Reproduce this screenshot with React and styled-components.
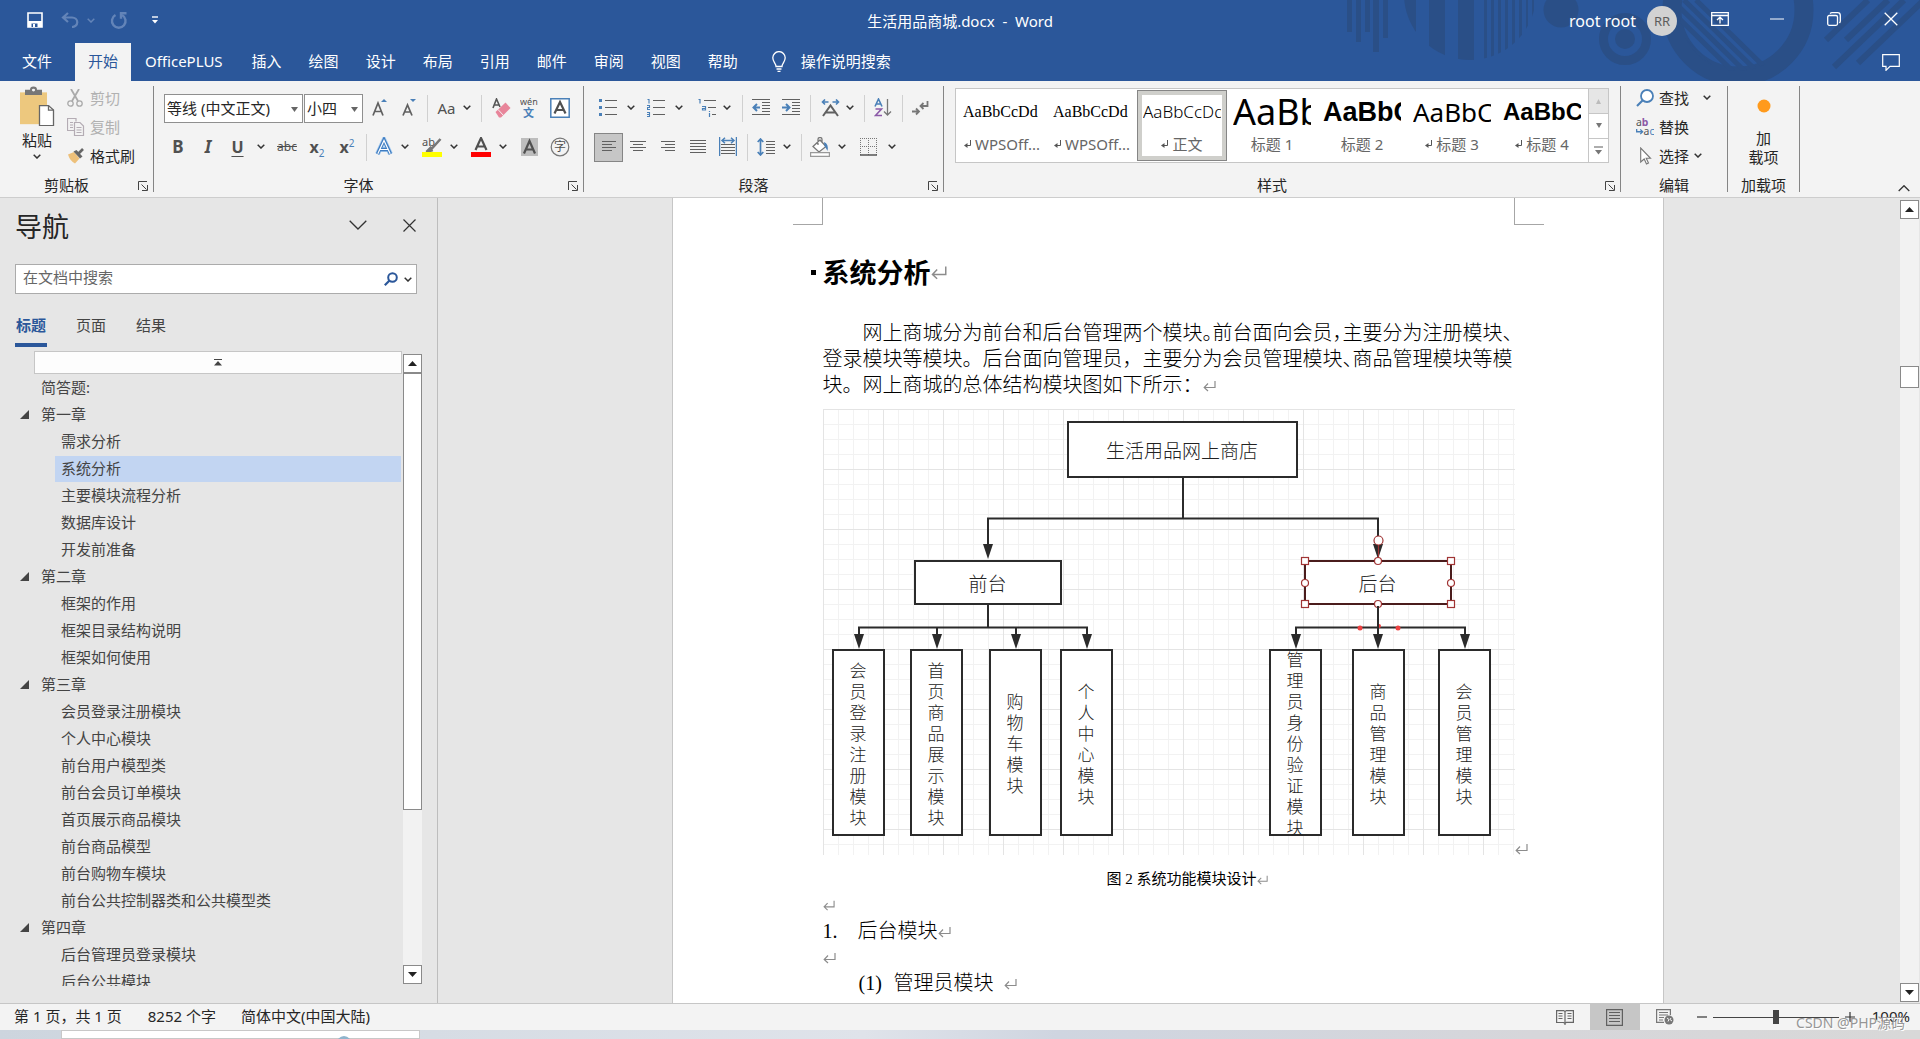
import React from "react";
import styled, { createGlobalStyle, css } from "styled-components";

const ui = `"Noto Sans", "Noto Sans CJK SC", sans-serif`;
const blue = "#2b579a";
const steel = "#4a80b8";

const Global = createGlobalStyle`
  * { box-sizing: border-box; }
  body { margin: 0; background: #e6e6e6; }
  button, input, select { font: inherit; color: inherit; }
  button { background: none; border: 0; padding: 0; cursor: pointer; }
  svg { display: block; flex: none; }
  p, h1, h2, ul, ol, figure { margin: 0; padding: 0; }
`;

const Shell = styled.div`
  display: flex;
  flex-direction: column;
  height: 100vh;
  overflow: hidden;
  font: 15px/20px ${ui};
  color: #262626;
  white-space: nowrap;
`;

/* ---------- header ---------- */
const Header = styled.header`
  position: relative;
  background: ${blue};
  color: #fff;
`;
const Decor = styled.svg`
  position: absolute;
  right: 0;
  top: 0;
`;
const TitleBar = styled.div`
  position: relative;
  display: grid;
  grid-template-columns: 1fr auto 1fr;
  align-items: center;
  height: 43px;
`;
const Quick = styled.div`
  display: flex;
  align-items: center;
  padding: 0 0 3px 27px;
`;
const QuickButton = styled.button`
  display: flex;
  align-items: center;
  gap: 8px;
  height: 24px;
  margin-right: ${(p) => p.$gap || 0}px;
`;
const DocName = styled.div`
  padding-bottom: 2px;
`;
const Account = styled.div`
  display: flex;
  align-items: center;
  justify-content: flex-end;
  padding: 0 1px 2px 0;
`;
const UserName = styled.span`
  font-size: 16px;
  margin-right: 11px;
`;
const Avatar = styled.span`
  width: 30px;
  height: 30px;
  border-radius: 50%;
  background: #d2d2d2;
  color: #5c5c5c;
  font-size: 13px;
  line-height: 30px;
  text-align: center;
  margin-right: 14px;
`;
const WindowButton = styled.button`
  display: flex;
  align-items: center;
  justify-content: center;
  width: 57px;
  height: 38px;
  margin-bottom: 3px;
`;
const TabBar = styled.nav`
  position: relative;
  display: flex;
  align-items: stretch;
  gap: 1px;
  height: 38px;
  padding-left: 9px;
`;
const Tab = styled.button`
  padding: 0 13px 2px;
  margin-right: ${(p) => p.$gap || 0}px;
  background: ${(p) => (p.$active ? "#f3f3f3" : "transparent")};
  color: ${(p) => (p.$active ? blue : "#fff")};
`;
const Tell = styled.button`
  display: flex;
  align-items: center;
  gap: 15px;
  padding: 0 0 2px 20px;
`;
const CommentButton = styled.button`
  margin: 0 20px 0 auto;
`;

/* ---------- ribbon ---------- */
const Ribbon = styled.div`
  display: flex;
  height: 117px;
  background: #f3f3f3;
  border-bottom: 1px solid #cdcdcd;
`;
const GroupBox = styled.section`
  display: flex;
  flex-direction: column;
  width: ${(p) => p.$w}px;
  flex: none;
`;
const GroupBody = styled.div`
  display: flex;
  flex: 1;
  flex-direction: ${(p) => (p.$rows ? "column" : "row")};
  gap: ${(p) => (p.$rows ? 10 : 0)}px;
  padding: ${(p) => p.$pad};
`;
const GroupLabel = styled.div`
  display: flex;
  height: 22px;
  span { flex: 1; text-align: center; }
`;
const Launcher = styled.button`
  display: flex;
  align-items: center;
  justify-content: center;
  width: 20px;
  height: 22px;
`;
const Divider = styled.div`
  width: 1px;
  flex: none;
  margin: 5px 0;
  background: #858585;
`;
const Row = styled.div`
  display: flex;
  align-items: center;
  height: 29px;
`;
const Sep = styled.span`
  width: 1px;
  height: 27px;
  margin: 0 3px 0 4px;
  background: #d0d0d0;
`;
const Tool = styled.button`
  display: flex;
  align-items: center;
  justify-content: center;
  gap: ${(p) => p.$gap || 8}px;
  width: ${(p) => p.$w}px;
  height: 29px;
  padding-bottom: 2px;
  ${(p) => p.$on && css`background: #c6c6c6; border: 1px solid #858585;`}
`;
const Letter = styled.span`
  font-size: ${(p) => p.$size || 17}px;
  color: #505050;
  font-weight: ${(p) => (p.$bold ? 700 : 400)};
  font-style: ${(p) => (p.$italic ? "italic" : "normal")};
  text-decoration: ${(p) => p.$line || "none"};
  text-underline-offset: 3px;
  sub, sup { font-size: 10px; line-height: 0; color: ${steel}; font-weight: 400; }
`;
const Combo = styled.label`
  position: relative;
  width: ${(p) => p.$w}px;
  height: 29px;
  margin-right: ${(p) => p.$gap}px;
  select {
    width: 100%;
    height: 100%;
    appearance: none;
    border: 1px solid #8f8f8f;
    border-radius: 0;
    background: #fff;
    padding: 0 2px 2px;
    outline: none;
  }
  svg { position: absolute; right: 5px; top: 13px; pointer-events: none; }
`;
const Paste = styled.button`
  display: flex;
  flex-direction: column;
  align-items: center;
  width: 46px;
  height: 78px;
  gap: 4px;
  margin: 2px 7px 0 0;
`;
const Stack = styled.div`
  display: flex;
  flex-direction: column;
`;
const LineTool = styled.button`
  display: flex;
  align-items: center;
  height: 29px;
  gap: 5px;
  padding-bottom: 2px;
  color: ${(p) => (p.$off ? "#b1b1b1" : "#262626")};
  > svg:first-child { width: 18px; }
  > svg:last-child { margin-left: ${(p) => p.$gap || 0}px; }
`;
const Gallery = styled.div`
  display: flex;
  height: 75px;
  border: 1px solid #c6c6c6;
  background: #fff;
`;
const Cells = styled.div`
  display: flex;
  padding: 1px;
`;
const Cell = styled.button`
  display: flex;
  flex-direction: column;
  width: 90px;
  height: 71px;
  padding: 2px 6px 0;
  overflow: hidden;
  ${(p) => p.$on && css`
    border: 1px solid #858585;
    box-shadow: inset 0 0 0 4px #cfcfcb;
    padding: 1px 5px 0;
  `}
`;
const Preview = styled.span`
  width: 78px;
  height: 42px;
  overflow: hidden;
  text-align: left;
  line-height: 40px;
  color: #000;
  font-family: ${(p) => p.$face};
  font-size: ${(p) => p.$size}px;
  font-weight: ${(p) => p.$weight || 400};
`;
const CellName = styled.span`
  display: flex;
  align-items: center;
  justify-content: center;
  gap: 3px;
  width: 78px;
  height: 20px;
  color: #666;
`;
const GalleryScroll = styled.div`
  display: grid;
  grid-template-rows: repeat(3, 1fr);
  width: 20px;
  border-left: 1px solid #c6c6c6;
  button { display: flex; align-items: center; justify-content: center; }
  button + button { border-top: 1px solid #c6c6c6; }
  button:first-child { background: #e6e6e6; }
`;
const AddIn = styled.button`
  display: flex;
  flex-direction: column;
  align-items: center;
  width: 100%;
  line-height: 19px;
  svg { margin-bottom: 16px; }
`;
const Collapse = styled.button`
  align-self: flex-end;
  margin: 0 10px 5px auto;
`;

/* ---------- workspace ---------- */
const Workspace = styled.div`
  display: flex;
  flex: 1;
  min-height: 0;
`;
const NavPane = styled.aside`
  display: flex;
  flex-direction: column;
  width: 438px;
  border-right: 1px solid #bdbdbd;
  padding: 9px 15px 17px;
  color: #444;
`;
const NavHead = styled.div`
  display: flex;
  align-items: center;
  gap: 36px;
  height: 40px;
  padding-right: 6px;
  h2 { flex: 1; font-size: 27px; line-height: 40px; font-weight: 400; color: #262626; }
  button { padding-bottom: 4px; }
`;
const SearchBox = styled.label`
  display: flex;
  align-items: center;
  gap: 6px;
  width: 402px;
  height: 30px;
  margin-top: 17px;
  padding: 0 4px 0 7px;
  border: 1px solid #ababab;
  background: #fff;
  input { flex: 1; border: 0; outline: 0; padding: 0 0 4px; background: none; }
  input::placeholder { color: #666; opacity: 1; }
`;
const NavTabs = styled.div`
  display: flex;
  gap: 28px;
  margin: 18px 0 4px;
`;
const NavTab = styled.button`
  height: 35px;
  width: 32px;
  padding-bottom: ${(p) => (p.$on ? 6 : 10)}px;
  color: ${(p) => (p.$on ? blue : "#444")};
  font-weight: ${(p) => (p.$on ? 700 : 400)};
  border-bottom: ${(p) => (p.$on ? `4px solid ${blue}` : 0)};
`;
const TreeArea = styled.div`
  display: flex;
  flex: 1;
  min-height: 0;
`;
const Tree = styled.ul`
  flex: 1;
  overflow: hidden;
  list-style: none;
`;
const TopStop = styled.li`
  display: flex;
  align-items: center;
  justify-content: center;
  height: 23px;
  margin: 0 1px 0 19px;
  border: 1px solid #c6c6c6;
  background: #fdfdfd;
`;
const Node = styled.li`
  display: flex;
  align-items: center;
  height: 27px;
  padding-left: ${(p) => (p.$deep ? 40 : 5)}px;
  svg { margin-right: 6px; }
`;
const NodeLink = styled.a`
  flex: 1;
  height: 26px;
  padding-left: 6px;
  line-height: 24px;
  margin-left: ${(p) => (p.$bare ? 15 : 0)}px;
  margin-right: 2px;
  color: inherit;
  text-decoration: none;
  background: ${(p) => (p.$on ? "#c2d5f2" : "transparent")};
`;
const ScrollBar = styled.div`
  display: flex;
  flex-direction: column;
  width: 19px;
  flex: none;
  background: #f2f2f2;
  margin: ${(p) => p.$m};
`;
const ScrollButton = styled.button`
  display: flex;
  align-items: center;
  justify-content: center;
  height: 19px;
  border: 1px solid #8a8a8a;
  background: #fff;
`;
const Track = styled.div`
  flex: 1;
  display: flex;
  flex-direction: column;
`;
const Before = styled.div`
  flex: ${(p) => p.$f};
`;
const Thumb = styled.div`
  flex: ${(p) => p.$f};
  border: 1px solid #8a8a8a;
  background: #fff;
`;
const Canvas = styled.main`
  display: flex;
  flex: 1;
  justify-content: center;
  min-width: 0;
  padding-right: 3px;
  overflow: hidden;
`;
const Page = styled.article`
  width: 992px;
  flex: none;
  padding: 0 149px 0 150px;
  border: solid #c6c6c6;
  border-width: 0 1px;
  background: #fff;
  color: #000;
  font: 300 20px/26px "Liberation Serif", "Noto Sans CJK SC", serif;
`;
const Corners = styled.div`
  display: flex;
  justify-content: space-between;
  margin: 0 -30px;
  span {
    width: 30px;
    height: 27px;
    border-bottom: 1px solid #a6a6a6;
  }
  span:first-child { border-right: 1px solid #a6a6a6; }
  span:last-child { border-left: 1px solid #a6a6a6; }
`;
const Heading = styled.h1`
  display: flex;
  align-items: center;
  margin: 27px 0 28px -12px;
  font: 700 27px/40px "Noto Sans CJK SC", sans-serif;
  &::before {
    content: "";
    width: 5px;
    height: 5px;
    margin-right: 7px;
    background: #000;
  }
`;
const Para = styled.p`
  text-indent: 40px;
  svg { display: inline-block; text-indent: 0; }
`;
const Half = styled.span`
  font-feature-settings: "halt";
`;
const Figure = styled.figure`
  display: flex;
  align-items: flex-end;
  margin: 11px -20px 11px 0;
`;
const Chart = styled.div`
  position: relative;
  width: 692px;
  height: 446px;
  flex: none;
  background-image:
    linear-gradient(#e4e4e4 1px, transparent 1px),
    linear-gradient(90deg, #e4e4e4 1px, transparent 1px),
    linear-gradient(#f2f2f2 1px, transparent 1px),
    linear-gradient(90deg, #f2f2f2 1px, transparent 1px);
  background-size: 60px 60px, 60px 60px, 15px 15px, 15px 15px;
`;
const Links = styled.svg`
  position: absolute;
  inset: 0;
`;
const Box = styled.div`
  position: absolute;
  left: ${(p) => p.$x}px;
  top: ${(p) => p.$y}px;
  width: ${(p) => p.$w}px;
  height: ${(p) => p.$h}px;
  display: flex;
  align-items: center;
  justify-content: center;
  border: 2px solid ${(p) => (p.$picked ? "#4a1c1c" : "#2b2b2b")};
  background: #fff;
  color: #222;
  font: 300 19px/21px "Noto Sans CJK SC", sans-serif;
  ${(p) => p.$tall && css`
    font-size: 17px;
    padding: 0 16px;
    white-space: normal;
    text-align: center;
    word-break: break-all;
  `}
`;
const Caption = styled.p`
  display: flex;
  align-items: center;
  justify-content: center;
  padding-left: 38px;
  font-size: 15px;
  font-weight: 400;
`;
const ListLine = styled.p`
  display: flex;
  align-items: center;
  height: 26px;
  padding-left: ${(p) => p.$in || 0}px;
  > span:first-child { width: 35px; }
`;

/* ---------- bottom ---------- */
const Status = styled.footer`
  position: relative;
  display: flex;
  align-items: center;
  height: 27px;
  padding: 0 10px 0 14px;
  border-top: 1px solid #c6c6c6;
  background: #f3f3f3;
`;
const StatusText = styled.span`
  padding-bottom: 2px;
  margin-right: ${(p) => p.$gap || 0}px;
`;
const ViewButton = styled.button`
  display: flex;
  align-items: center;
  justify-content: center;
  width: 50px;
  height: 26px;
  margin-left: ${(p) => (p.$first ? "auto" : 0)};
  background: ${(p) => (p.$on ? "#c6c6c6" : "transparent")};
`;
const Zoom = styled.div`
  display: flex;
  align-items: center;
  gap: 6px;
  margin: 0 17px 0 7px;
`;
const Slider = styled.input`
  width: 126px;
  height: 16px;
  margin: 0;
  appearance: none;
  background: linear-gradient(#444, #444) center / 100% 1px no-repeat;
  &::-webkit-slider-thumb {
    appearance: none;
    width: 6px;
    height: 14px;
    background: #444;
  }
`;
const Watermark = styled.span`
  position: absolute;
  right: 15px;
  top: 9px;
  font-size: 14px;
  color: #969696;
  text-shadow: 1px 1px 0 #fff;
`;
const Taskbar = styled.div`
  display: flex;
  align-items: flex-start;
  height: 9px;
  padding: 0 92px 0 61px;
  overflow: hidden;
  background: linear-gradient(90deg, #cdd5de, #dfe3ea 45%, #cfd5e0 55%, #d6d6da 80%, #d8d8d8);
  color: #000;
`;
const TaskPreview = styled.div`
  width: 359px;
  height: 9px;
  padding: 4px 0 0 275px;
  border: 1px solid #c8c8c8;
  background: #fff;
`;
const Clock = styled.time`
  margin: 3px 0 0 auto;
`;

/* ---------- drawings ---------- */
const S = ({ w, h, children, ...r }) => (
  <svg width={w} height={h} viewBox={`0 0 ${w} ${h}`} fill="none" aria-hidden="true" {...r}>{children}</svg>
);
const Chev = ({ c = "#333", w = 8, s = 1.5, up }) => (
  <S w={w} h={w / 2 + 1}>
    <path d={up ? `M.7 ${w / 2}L${w / 2} .7L${w - 0.7} ${w / 2}` : `M.7 .7L${w / 2} ${w / 2}L${w - 0.7} .7`} stroke={c} strokeWidth={s} />
  </S>
);
const Tri = ({ up, c = "#222", w = 9 }) => (
  <S w={w} h={5}><path d={up ? `M0 5L${w / 2} 0L${w} 5z` : `M0 0L${w / 2} 5L${w} 0z`} fill={c} /></S>
);
const Mark = ({ w = 13 }) => (
  <svg width={w} height={w} viewBox="0 0 13 13" fill="none" aria-hidden="true">
    <path d="M12 2v6.500H1.500M5 4.500L1.200 8.500L5 12" stroke="#8c8c8c" strokeWidth="1.200" />
  </svg>
);
const SmallMark = () => (
  <S w={8} h={8}><path d="M6.500 0v5.500H2" stroke="#555" /><path d="M0 5.500L3.500 3v5z" fill="#555" /></S>
);
const Lines = ({ rows, w = 18, h = 18, c = "#606060", children }) => (
  <S w={w} h={h}>
    {rows.map(([x1, x2, y]) => <path key={`${x1}-${y}`} d={`M${x1} ${y}.5H${x2}`} stroke={c} />)}
    {children}
  </S>
);
const SvgText = ({ x, y, s, c = "#505050", b, children }) => (
  <text x={x} y={y} fontSize={s} fill={c} fontWeight={b ? 700 : 400} fontFamily="Noto Sans, Noto Sans CJK SC, sans-serif">{children}</text>
);

const LaunchIcon = () => (
  <S w={10} h={10}><path d="M.5 9V.5H9M3.500 3.500L8.500 8.500M9.500 4v5.500H4" stroke="#444" /></S>
);

function HeaderArt() {
  const d = "#2a4f87";
  return (
    <Decor width="580" height="81" viewBox="1340 0 580 81" aria-hidden="true">
      <defs>
        <clipPath id="disc"><circle cx="1470" cy="-6" r="66" /></clipPath>
        <clipPath id="hole"><circle cx="1738" cy="13" r="58" /></clipPath>
      </defs>
      <g fill={d}>
        <path d="M1347 0h5v32h-5zM1356 0h5v42h-5zM1365 0h5v32h-5zM1373 0h6v52h-6zM1383 0h5v38h-5z" />
        <path clipPath="url(#disc)" d="M1404 0h12v80h-12zM1429 0h16v80h-16zM1458 0h16v80h-16zM1484 0h3v80h-3zM1491 0h3v80h-3zM1498 0h3v80h-3zM1505 0h3v80h-3zM1512 0h3v80h-3zM1519 0h3v80h-3zM1526 0h2v80h-2zM1532 0h2v80h-2z" />
        <circle cx="1561" cy="10" r="17.500" />
        <circle cx="1625" cy="39" r="10" />
      </g>
      <g fill="none" stroke={d}>
        <circle cx="1625" cy="39" r="21.500" strokeWidth="9" />
        <circle cx="1738" cy="10" r="66" strokeWidth="19" />
        <path clipPath="url(#hole)" strokeWidth="5" d="M1660 0l90 88M1672 0l90 88M1684 0l90 88M1696 0l90 88M1642 0l90 88" />
        <path strokeWidth="6" d="M1826 40L1868 0M1846 40L1888 0M1834 67L1904 0M1858 63L1924 0" />
      </g>
    </Decor>
  );
}

const tabs = ["插入", "绘图", "设计", "布局", "引用", "邮件", "审阅", "视图", "帮助"];

function TopBar() {
  return (
    <Header>
      <HeaderArt />
      <TitleBar>
        <Quick>
          <QuickButton $gap={18} aria-label="保存">
            <S w={16} h={16}><path d="M1 1h14v14H1z" stroke="#fff" strokeWidth="1.600" /><path d="M1 9h14v6H1z" fill="#fff" /><path d="M4.500 15v-3.500h6V15" fill={blue} /><path d="M6 12h2v3H6z" fill="#fff" /></S>
          </QuickButton>
          <QuickButton $gap={15} aria-label="撤消">
            <S w={18} h={16}><path d="M7 1L2 5.500L7 10M2 5.500h9a5 4.500 0 0 1 0 9.500" stroke="#6384b8" strokeWidth="2.200" /></S>
            <Chev c="#6384b8" />
          </QuickButton>
          <QuickButton $gap={24} aria-label="重复">
            <S w={18} h={17}><path d="M5.500 3a6.800 6.800 0 1 0 6.500 0" stroke="#6384b8" strokeWidth="2.400" /><path d="M16.500 1.300H11v5.500" stroke="#6384b8" strokeWidth="2.400" /></S>
          </QuickButton>
          <QuickButton aria-label="自定义快速访问工具栏">
            <S w={6} h={8}><path d="M0 1h6" stroke="#fff" strokeWidth="1.400" /><path d="M0 4h6L3 7.500z" fill="#fff" /></S>
          </QuickButton>
        </Quick>
        <DocName>生活用品商城.docx&nbsp; -&nbsp; Word</DocName>
        <Account>
          <UserName>root root</UserName>
          <Avatar>RR</Avatar>
          <WindowButton aria-label="功能区显示选项">
            <S w={18} h={14}><path d="M.7 .7h16.600v12.600H.7zM.7 3.500h16.600M9 11.500V5.500M6 8L9 5.200L12 8" stroke="#fff" strokeWidth="1.300" /></S>
          </WindowButton>
          <WindowButton aria-label="最小化"><S w={14} h={2}><path d="M0 1h14" stroke="#fff" /></S></WindowButton>
          <WindowButton aria-label="还原">
            <S w={14} h={14}><rect x=".7" y="3.500" width="9.800" height="9.800" rx="1.500" stroke="#fff" strokeWidth="1.300" /><path d="M3 1.500Q4 .7 5 .7h5.500a2.800 2.800 0 0 1 2.800 2.800V9q0 1-.8 2" stroke="#fff" strokeWidth="1.300" /></S>
          </WindowButton>
          <WindowButton aria-label="关闭"><S w={14} h={14}><path d="M.7 .7l12.600 12.600M13.300 .7L.7 13.300" stroke="#fff" strokeWidth="1.300" /></S></WindowButton>
        </Account>
      </TitleBar>
      <TabBar>
        <Tab $gap={9}>文件</Tab>
        <Tab $active>开始</Tab>
        <Tab $gap={2}>OfficePLUS</Tab>
        {tabs.map((t) => <Tab key={t}>{t}</Tab>)}
        <Tell>
          <S w={14} h={21}><path d="M4 15.500c0-3-3.200-4.500-3.200-8.700a6.200 6.200 0 0 1 12.400 0c0 4.200-3.200 5.700-3.200 8.700zM4.500 18h5M5.500 20.300h3" stroke="#fff" strokeWidth="1.300" /></S>
          操作说明搜索
        </Tell>
        <CommentButton aria-label="批注">
          <S w={18} h={17}><path d="M.7 .7h16.600v11.600H8L4 16.300V12.300H.7z" stroke="#fff" strokeWidth="1.200" /></S>
        </CommentButton>
      </TabBar>
    </Header>
  );
}

function Group({ w, label, pad, rows, launch, children }) {
  return (
    <>
      <GroupBox $w={w}>
        <GroupBody $pad={pad} $rows={rows}>{children}</GroupBody>
        <GroupLabel>
          <span>{label}</span>
          {launch && <Launcher aria-label={`${label}设置`}><LaunchIcon /></Launcher>}
        </GroupLabel>
      </GroupBox>
      <Divider />
    </>
  );
}

function ClipboardGroup() {
  return (
    <Group w={153} label="剪贴板" pad="3px 0 0 14px" launch>
      <Paste>
        <svg width="36" height="40" viewBox="0 0 36 44" fill="none" preserveAspectRatio="none" aria-hidden="true">
          <path d="M1 7h27v35H1z" fill="#edc87e" /><path d="M6 4h5a3.500 3.500 0 0 1 7 0h5v6H6z" fill="#777" /><circle cx="14.500" cy="4.500" r="1.600" fill="#f3f3f3" />
          <path d="M20.500 21.500h9l5 5v17h-14z" fill="#fff" stroke="#666" strokeWidth="1.300" /><path d="M29.500 21.500v5h5" stroke="#666" strokeWidth="1.300" />
        </svg>
        粘贴
        <Chev />
      </Paste>
      <Stack>
        <LineTool $off>
          <S w={18} h={18}><path d="M4 0l7 12M12 0L5 12" stroke="#aaa" strokeWidth="1.800" /><circle cx="3.500" cy="14.500" r="2.700" stroke="#aaa" strokeWidth="1.300" /><circle cx="12.500" cy="14.500" r="2.700" stroke="#aaa" strokeWidth="1.300" /></S>
          剪切
        </LineTool>
        <LineTool $off>
          <S w={18} h={18}><path d="M9 3.500V.5H.5v12H7M3 4.500h3M3 7h3M3 9.500h3" stroke="#b4acb4" strokeWidth="1.200" /><path d="M7.500 4.500H13l3.500 3.500v9.500h-9zM9.500 9.500h5M9.500 12h5M9.500 14.500h5" stroke="#b4acb4" strokeWidth="1.200" /></S>
          复制
        </LineTool>
        <LineTool>
          <S w={18} h={16}><path d="M1 6.500L7 4l5.500 6.500L8 15.500Q3 13 1 6.500z" fill="#edc07a" /><path d="M6.500 3.500l3-1.500 6 6.500-2.500 2z" fill="#666" /><path d="M11.500 5.500L16 1" stroke="#666" strokeWidth="2.600" /></S>
          格式刷
        </LineTool>
      </Stack>
    </Group>
  );
}

function FontGroup() {
  return (
    <Group w={429} label="字体" pad="13px 0 0 10px" rows launch>
      <Row>
        <Combo $w={139} $gap={1}><select aria-label="字体"><option>等线 (中文正文)</option></select><Tri c="#666" w={7} /></Combo>
        <Combo $w={59} $gap={2}><select aria-label="字号"><option>小四</option></select><Tri c="#666" w={7} /></Combo>
        <Tool $w={30} aria-label="增大字号"><S w={16} h={18}><path d="M1 16.500L6 4l5 12.500M3 12.500h6" stroke="#606060" strokeWidth="1.700" /><path d="M9 3L12 0l3 3z" fill={steel} /></S></Tool>
        <Tool $w={28} aria-label="减小字号"><S w={16} h={18}><path d="M2 16.500L6.500 6L11 16.500M3.500 13h6" stroke="#606060" strokeWidth="1.700" /><path d="M9 0L12 3l3-3z" fill={steel} /></S></Tool>
        <Sep />
        <Tool $w={46} $gap={7}><Letter $size={15}>Aa</Letter><Chev /></Tool>
        <Sep />
        <Tool $w={32} aria-label="清除格式"><S w={19} h={20}><path d="M1 10L4.500 1L8 9M2.500 7h4" stroke="#555" strokeWidth="1.600" /><path d="M3.500 14L13.500 4.500l5 5.500L9 19.500H7z" fill="#e8859a" /><path d="M6 11.500l5.500 6" stroke="#f3f3f3" /></S></Tool>
        <Tool $w={24} aria-label="拼音指南"><S w={18} h={20}><SvgText x={0} y={7} s={9}>wén</SvgText><SvgText x={3} y={19} s={11} c={steel} b>文</SvgText></S></Tool>
        <Tool $w={38} aria-label="字符边框"><S w={20} h={20}><path d="M.8 .8h18.400v18.400H.8z" fill="#fff" stroke={steel} strokeWidth="1.500" /><path d="M4.500 15.500L10 4l5.500 11.500M6.500 12h7" stroke="#505050" strokeWidth="2.200" /></S></Tool>
      </Row>
      <Row>
        <Tool $w={28}><Letter $bold>B</Letter></Tool>
        <Tool $w={32}><Letter $bold $italic>I</Letter></Tool>
        <Tool $w={48} $gap={13}><Letter $bold $size={16} $line="underline">U</Letter><Chev /></Tool>
        <Tool $w={30}><Letter $size={12} $line="line-through">abc</Letter></Tool>
        <Tool $w={30}><Letter $bold $size={16}>x<sub>2</sub></Letter></Tool>
        <Tool $w={30}><Letter $bold $size={16}>x<sup>2</sup></Letter></Tool>
        <Sep />
        <Tool $w={44} aria-label="文本效果"><S w={18} h={20}><path d="M2.500 17L9 3l6.500 14M5 12.500h8" stroke="#a9cdf0" strokeWidth="5" /><path d="M2.500 17L9 3l6.500 14M5 12.500h8" stroke="#3f7cc0" strokeWidth="3.400" /><path d="M2.800 16.700L9 3.500l6.200 13.200M5 12.500h8" stroke="#fff" strokeWidth="1.200" /></S><Chev /></Tool>
        <Tool $w={52} aria-label="突出显示颜色"><S w={20} h={20}><SvgText x={0} y={9} s={11}>ab</SvgText><path d="M18.500 2L9 12.500M8.500 11l-4 4 5-1.500z" stroke="#777" strokeWidth="2.600" /><path d="M0 15h20v5H0z" fill="#ff0" /></S><Chev /></Tool>
        <Tool $w={46} aria-label="字体颜色"><S w={20} h={20}><path d="M4.500 13L10 1l5.500 12M6.500 9.500h7" stroke="#505050" strokeWidth="2.200" /><path d="M0 15h20v5H0z" fill="red" /></S><Chev /></Tool>
        <Tool $w={34} aria-label="字符底纹"><S w={17} h={18}><path d="M0 0h17v18H0z" fill="#bdbdbd" /><path d="M3 15.500L8.500 3L14 15.500M5 11.500h7" stroke="#505050" strokeWidth="2.200" /></S></Tool>
        <Tool $w={28} aria-label="带圈字符"><S w={20} h={20}><circle cx="10" cy="10" r="8.800" stroke="#777" strokeWidth="1.200" /><SvgText x={4} y={14} s={12}>字</SvgText></S></Tool>
      </Row>
    </Group>
  );
}

function ParagraphGroup() {
  const arrowRight = <path d="M0 8.500h7M4 5l3.500 3.500L4 12" stroke={steel} strokeWidth="2" />;
  const arrowLeft = <path d="M1 8.500h7M5 5L1.500 8.500L5 12" stroke={steel} strokeWidth="2" />;
  const indent = [[0, 18, 0], [10, 18, 3], [10, 18, 6], [10, 18, 9], [10, 18, 12], [0, 18, 15]];
  return (
    <Group w={359} label="段落" pad="13px 0 0 10px" rows launch>
      <Row>
        <Tool $w={46} $gap={10} aria-label="项目符号"><Lines rows={[[6, 18, 1], [6, 18, 8], [6, 18, 15]]}><path d="M0 0h3v3H0zM0 7h3v3H0zM0 14h3v3H0z" fill={steel} /></Lines><Chev /></Tool>
        <Tool $w={50} $gap={10} aria-label="编号"><Lines rows={[[6, 18, 1], [6, 18, 8], [6, 18, 15]]}><path d="M.5 .5H2v4M0 6.500h2.500v2H.5v2h2.500M0 13.500h2.500v4H0M0 15.500h2.500" stroke={steel} strokeWidth="1.100" /></Lines><Chev /></Tool>
        <Tool $w={48} $gap={7} aria-label="多级列表"><Lines rows={[[6, 18, 1], [10, 18, 8], [14, 18, 15]]}><path d="M.5 .5H2v4M4 7.500h3.500v3.500H4.500V9.500h3M11.500 14v4M11.500 12v1" stroke={steel} strokeWidth="1.200" /></Lines><Chev /></Tool>
        <Sep />
        <Tool $w={30} aria-label="减少缩进量"><Lines h={17} rows={indent}>{arrowLeft}</Lines></Tool>
        <Tool $w={30} aria-label="增加缩进量"><Lines h={17} rows={indent}>{arrowRight}</Lines></Tool>
        <Sep />
        <Tool $w={46} $gap={6} aria-label="中文版式"><S w={19} h={18}><path d="M2 17L9.500 6.500L17 17M5 13.500h9" stroke="#606060" strokeWidth="2" /><path d="M7.500 3H1.500M4 .5L1.500 3L4 5.500M11.500 3h6M15 .5L17.500 3L15 5.500" stroke={steel} strokeWidth="1.600" /></S><Chev /></Tool>
        <Sep />
        <Tool $w={30} aria-label="排序"><S w={18} h={19}><path d="M1 8.500L4.500 1L8 8.500M2.500 6h4" stroke={steel} strokeWidth="1.600" /><path d="M1.500 11h6L1.500 17.500h6.500" stroke="#8c5aa8" strokeWidth="1.600" /><path d="M13.500 1v16M10 13.500l3.500 3.500 3.500-3.500" stroke="#777" strokeWidth="1.300" /></S></Tool>
        <Sep />
        <Tool $w={28} aria-label="显示编辑标记"><S w={17} h={16}><path d="M15.500 1v5H9M11.500 3L8.500 6l3 3M0 11.500h6M4 8.500l3 3-3 3" stroke="#777" strokeWidth="1.800" /></S></Tool>
      </Row>
      <Row>
        <Tool $w={29} $on aria-label="左对齐"><Lines w={16} h={12} rows={[[1, 15, 0], [1, 11, 3], [1, 15, 6], [1, 11, 9]]} /></Tool>
        <Tool $w={30} aria-label="居中"><Lines w={16} h={12} rows={[[0, 16, 0], [3, 13, 3], [0, 16, 6], [3, 13, 9]]} /></Tool>
        <Tool $w={30} aria-label="右对齐"><Lines w={16} h={12} rows={[[1, 15, 0], [5, 15, 3], [1, 15, 6], [5, 15, 9]]} /></Tool>
        <Tool $w={30} aria-label="两端对齐"><Lines w={16} h={14} rows={[[0, 16, 0], [0, 16, 3], [0, 16, 6], [0, 16, 9], [0, 16, 12]]} /></Tool>
        <Tool $w={30} aria-label="分散对齐"><Lines h={19} rows={[[2, 16, 7], [2, 16, 10], [2, 16, 13], [2, 16, 16]]}><path d="M.5 0v19M17.500 0v19M3 3.500h12M6 .8L3 3.500L6 6.200M12 .8l3 2.700-3 2.700" stroke={steel} strokeWidth="1.500" /></Lines></Tool>
        <Sep />
        <Tool $w={46} aria-label="行距"><Lines rows={[[9, 18, 3], [9, 18, 6], [9, 18, 9], [9, 18, 12], [9, 18, 15]]}><path d="M3.500 1v16M.7 4l2.800-3 2.800 3M.7 14l2.800 3 2.800-3" stroke={steel} strokeWidth="1.700" /></Lines><Chev /></Tool>
        <Sep />
        <Tool $w={46} aria-label="底纹"><S w={20} h={20}><path d="M3 9.500L10 3l6 6.500-7 5.500zM8 8V2.500a2 2 0 0 1 4 0V6" stroke="#777" strokeWidth="1.300" fill="#fff" /><path d="M14 5q5 2 3.500 9-2-4-3-5z" fill={steel} /><path d="M.6 15.600h18.800v3.800H.6z" fill="#fff" stroke="#999" strokeWidth="1.200" /></S><Chev /></Tool>
        <Tool $w={54} $gap={11} aria-label="边框"><S w={17} h={18}><path d="M.5 0v17M16.500 0v17M8.500 0v17M0 .5h17M0 8.500h17" stroke="#777" strokeDasharray="1 1" /><path d="M0 17h17" stroke="#555" strokeWidth="1.500" /></S><Chev /></Tool>
      </Row>
    </Group>
  );
}

const serif = `"Liberation Serif", serif`;
const arial = `"Liberation Sans", sans-serif`;
const styles = [
  { text: "AaBbCcDd", face: serif, size: 16, name: "WPSOff...", mark: true },
  { text: "AaBbCcDd", face: serif, size: 16, name: "WPSOff...", mark: true },
  { text: "AaBbCcDd", face: ui, size: 17, weight: 300, name: "正文", mark: true, on: true },
  { text: "AaBb", face: ui, size: 36, name: "标题 1" },
  { text: "AaBbC", face: arial, size: 27, weight: 700, name: "标题 2" },
  { text: "AaBbC", face: ui, size: 26, name: "标题 3", mark: true },
  { text: "AaBbC", face: arial, size: 24, weight: 700, name: "标题 4", mark: true },
];

function StylesGroup() {
  return (
    <Group w={676} label="样式" pad="7px 0 0 11px" launch>
      <Gallery>
        <Cells>
          {styles.map((s, i) => (
            <Cell key={i} $on={s.on}>
              <Preview $face={s.face} $size={s.size} $weight={s.weight}>{s.text}</Preview>
              <CellName>{s.mark && <SmallMark />}{s.name}</CellName>
            </Cell>
          ))}
        </Cells>
        <GalleryScroll>
          <button aria-label="上一行"><Tri up c="#bbb" w={5} /></button>
          <button aria-label="下一行"><Tri c="#777" w={6} /></button>
          <button aria-label="其他样式"><S w={9} h={9}><path d="M0 1h9" stroke="#777" strokeWidth="1.200" /><path d="M1 4h7L4.500 8.500z" fill="#777" /></S></button>
        </GalleryScroll>
      </Gallery>
    </Group>
  );
}

function EditGroup() {
  return (
    <Group w={106} label="编辑" pad="3px 0 0 15px">
      <Stack>
        <LineTool $gap={9}>
          <S w={18} h={18}><circle cx="11" cy="7" r="6" stroke={steel} strokeWidth="1.800" fill="#fff" /><path d="M6.500 11.500L1 17" stroke={steel} strokeWidth="2.200" /></S>
          查找
          <Chev />
        </LineTool>
        <LineTool>
          <S w={19} h={18}><text x="0" y="8" fontSize="11" fill="#555" fontFamily="Noto Sans, sans-serif">a<tspan fill="#8c5aa8" fontWeight="700">b</tspan></text><text x="8" y="17" fontSize="11" fill="#555" fontFamily="Noto Sans, sans-serif">a<tspan fill={steel}>c</tspan></text><path d="M.7 11v3h6M4.500 11.500L7 14l-2.500 2.500" stroke={steel} strokeWidth="1.400" /></S>
          <span>替换</span>
        </LineTool>
        <LineTool>
          <S w={18} h={18}><path d="M4.700 1v14l3.500-3 2.300 5 2-1-2.300-4.700h4.300z" stroke="#777" strokeWidth="1.100" fill="#fff" /></S>
          选择
          <Chev />
        </LineTool>
      </Stack>
    </Group>
  );
}

function RibbonBar() {
  return (
    <Ribbon>
      <ClipboardGroup />
      <FontGroup />
      <ParagraphGroup />
      <StylesGroup />
      <EditGroup />
      <Group w={71} label="加载项" pad="18px 0 0">
        <AddIn>
          <S w={14} h={14}><circle cx="7" cy="7" r="6.500" fill="#ff9a1c" /></S>
          <span>加</span>
          <span>载项</span>
        </AddIn>
      </Group>
      <Collapse aria-label="折叠功能区"><Chev w={12} s={1.300} up /></Collapse>
    </Ribbon>
  );
}

const outline = [
  ["简答题:", 0], ["第一章", 1], ["需求分析"], ["系统分析"], ["主要模块流程分析"], ["数据库设计"], ["开发前准备"],
  ["第二章", 1], ["框架的作用"], ["框架目录结构说明"], ["框架如何使用"],
  ["第三章", 1], ["会员登录注册模块"], ["个人中心模块"], ["前台用户模型类"], ["前台会员订单模块"], ["首页展示商品模块"],
  ["前台商品模型"], ["前台购物车模块"], ["前台公共控制器类和公共模型类"],
  ["第四章", 1], ["后台管理员登录模块"], ["后台公共模块"],
];

function Scroller({ before, thumb, after, m }) {
  return (
    <ScrollBar $m={m}>
      <ScrollButton aria-label="向上滚动"><Tri up /></ScrollButton>
      <Track><Before $f={before} /><Thumb $f={thumb} /><Before $f={after} /></Track>
      <ScrollButton aria-label="向下滚动"><Tri /></ScrollButton>
    </ScrollBar>
  );
}

function Navigation() {
  return (
    <NavPane>
      <NavHead>
        <h2>导航</h2>
        <button aria-label="任务窗格选项"><Chev w={18} s={1.300} /></button>
        <button aria-label="关闭"><S w={13} h={13}><path d="M.5 .5l12 12M12.500 .5l-12 12" stroke="#333" strokeWidth="1.200" /></S></button>
      </NavHead>
      <SearchBox>
        <input aria-label="在文档中搜索" placeholder="在文档中搜索" />
        <S w={14} h={14}><circle cx="8.500" cy="5.500" r="4.300" stroke={blue} strokeWidth="2" /><path d="M5.500 8.500L.8 13.200" stroke={blue} strokeWidth="2.200" /></S>
        <Chev />
      </SearchBox>
      <NavTabs>
        <NavTab $on>标题</NavTab>
        <NavTab>页面</NavTab>
        <NavTab>结果</NavTab>
      </NavTabs>
      <TreeArea>
        <Tree>
          <TopStop><S w={8} h={7}><path d="M0 .5h8" stroke="#444" /><path d="M0 6.500L4 2l4 4.500z" fill="#444" /></S></TopStop>
          {outline.map(([name, level]) => (
            <Node key={name} $deep={level === undefined}>
              {level === 1 && <S w={9} h={9}><path d="M9 0v9H0z" fill="#444" /></S>}
              <NodeLink href="#" $on={name === "系统分析"} $bare={level === 0}>{name}</NodeLink>
            </Node>
          ))}
        </Tree>
        <Scroller before={0} thumb={436} after={156} m="3px 0 2px" />
      </TreeArea>
    </NavPane>
  );
}

const leaves = [
  [9, "会员登录注册模块"], [87, "首页商品展示模块"], [166, "购物车模块"], [237, "个人中心模块"],
  [446, "管理员身份验证模块"], [529, "商品管理模块"], [615, "会员管理模块"],
];

function StructureChart() {
  const heads = [[165, 150], [555, 150], [36, 240], [114, 240], [193, 240], [264, 240], [473, 240], [555, 240], [642, 240]];
  return (
    <Chart>
      <Box $x={244} $y={12} $w={231} $h={57}>生活用品网上商店</Box>
      <Box $x={91} $y={151} $w={148} $h={45}>前台</Box>
      <Box $x={481} $y={151} $w={148} $h={45} $picked>后台</Box>
      {leaves.map(([x, name]) => <Box key={name} $x={x} $y={240} $w={53} $h={187} $tall>{name}</Box>)}
      <Links width="692" height="446" viewBox="0 0 692 446" fill="none" aria-hidden="true">
        <path stroke="#2b2b2b" strokeWidth="2" d="M360 69v40M165 140V109.500H555V140M165 196v22.500M36 228v-9.500h228v9.500M114 218v10M193 218v10M555 200v30M473 228v-9.500h169v9.500" />
        {heads.map(([x, y]) => <path key={`${x}-${y}`} d={`M${x - 5} ${y - 15}h10l-5 15z`} fill="#2b2b2b" />)}
        <g fill="#ee4444"><circle cx="537" cy="219" r="2.500" /><circle cx="556" cy="217" r="2" /><circle cx="575" cy="219" r="2.500" /></g>
        <g fill="#fff" stroke="#a03434" strokeWidth="1.200">
          <path d="M555.500 136v13" />
          <circle cx="555.500" cy="131.500" r="4.500" />
          {[[482, 152], [628, 152], [482, 195], [628, 195]].map(([x, y]) => <rect key={`${x}${y}`} x={x - 3.5} y={y - 3.5} width="7" height="7" />)}
          {[[555, 152], [555, 195], [482, 174], [628, 174]].map(([x, y]) => <circle key={`${x}${y}`} cx={x} cy={y} r="3.500" />)}
        </g>
        <path stroke="#2b2b2b" strokeWidth="2" d="M555 197v22" />
      </Links>
    </Chart>
  );
}

function DocumentPage() {
  return (
    <Canvas>
      <Page>
        <Corners><span /><span /></Corners>
        <Heading>系统分析<Mark w={16} /></Heading>
        <Para>
          网上商城分为前台和后台管理两个模块<Half>。</Half>前台面向会员<Half>，</Half>主要分为注册模块、<br />
          登录模块等模块。后台面向管理员，主要分为会员管理模块<Half>、</Half>商品管理模块等模<br />
          块。网上商城的总体结构模块图如下所示：<Mark />
        </Para>
        <Figure><StructureChart /><Mark /></Figure>
        <Caption>图 2 系统功能模块设计<Mark w={11} /></Caption>
        <ListLine><Mark w={12} /></ListLine>
        <ListLine><span>1.</span>后台模块<Mark /></ListLine>
        <ListLine><Mark /></ListLine>
        <ListLine $in={36}><span>(1)</span>管理员模块&nbsp;&nbsp;<Mark /></ListLine>
      </Page>
    </Canvas>
  );
}

function StatusBar() {
  return (
    <Status>
      <StatusText $gap={26}>第 1 页，共 1 页</StatusText>
      <StatusText $gap={25}>8252 个字</StatusText>
      <StatusText>简体中文(中国大陆)</StatusText>
      <ViewButton $first aria-label="阅读视图">
        <S w={18} h={16}><path d="M.6 1.600h7L9 2.500l1.400-.9h7v11.800h-7L9 14.500l-1.400-1H.6zM9 2v14M2.500 4.500h4M2.500 7h4M2.500 9.500h4M11.500 4.500h4M11.500 7h4M11.500 9.500h4" stroke="#666" strokeWidth="1.200" /></S>
      </ViewButton>
      <ViewButton $on aria-label="页面视图">
        <S w={17} h={17}><path d="M.6 .6h15.800v15.800H.6zM3 3.500h11M3 6.500h11M3 9.500h11M3 12.500h11" stroke="#606060" strokeWidth="1.200" /></S>
      </ViewButton>
      <ViewButton aria-label="Web 版式视图">
        <S w={18} h={16}><path d="M8 13.400H.6V.6h13.800V6M3 3.500h9M3 6h9M3 8.500h5M3 11h4" stroke="#777" strokeWidth="1.200" /><circle cx="13" cy="11" r="4.500" fill="#777" /><path d="M11 9l2 1.500-1 2M15 9l-1 1.500 2 1.500" stroke="#f3f3f3" /></S>
      </ViewButton>
      <Zoom>
        <button aria-label="缩小"><S w={10} h={10}><path d="M0 5h10" stroke="#333" strokeWidth="1.200" /></S></button>
        <Slider type="range" min="0" max="100" defaultValue="50" aria-label="缩放级别" />
        <button aria-label="放大"><S w={10} h={10}><path d="M0 5h10M5 0v10" stroke="#333" strokeWidth="1.200" /></S></button>
      </Zoom>
      <StatusText>100%</StatusText>
      <Watermark>CSDN @PHP源码</Watermark>
    </Status>
  );
}

export default function App() {
  return (
    <Shell>
      <Global />
      <TopBar />
      <RibbonBar />
      <Workspace>
        <Navigation />
        <DocumentPage />
        <Scroller before={148} thumb={20} after={598} m="2px 1px 1px 0" />
      </Workspace>
      <StatusBar />
      <Taskbar>
        <TaskPreview><S w={14} h={5}><path d="M0 5Q7-3 14 5z" fill="#8fb4cc" /></S></TaskPreview>
        <Clock>17:50</Clock>
      </Taskbar>
    </Shell>
  );
}
